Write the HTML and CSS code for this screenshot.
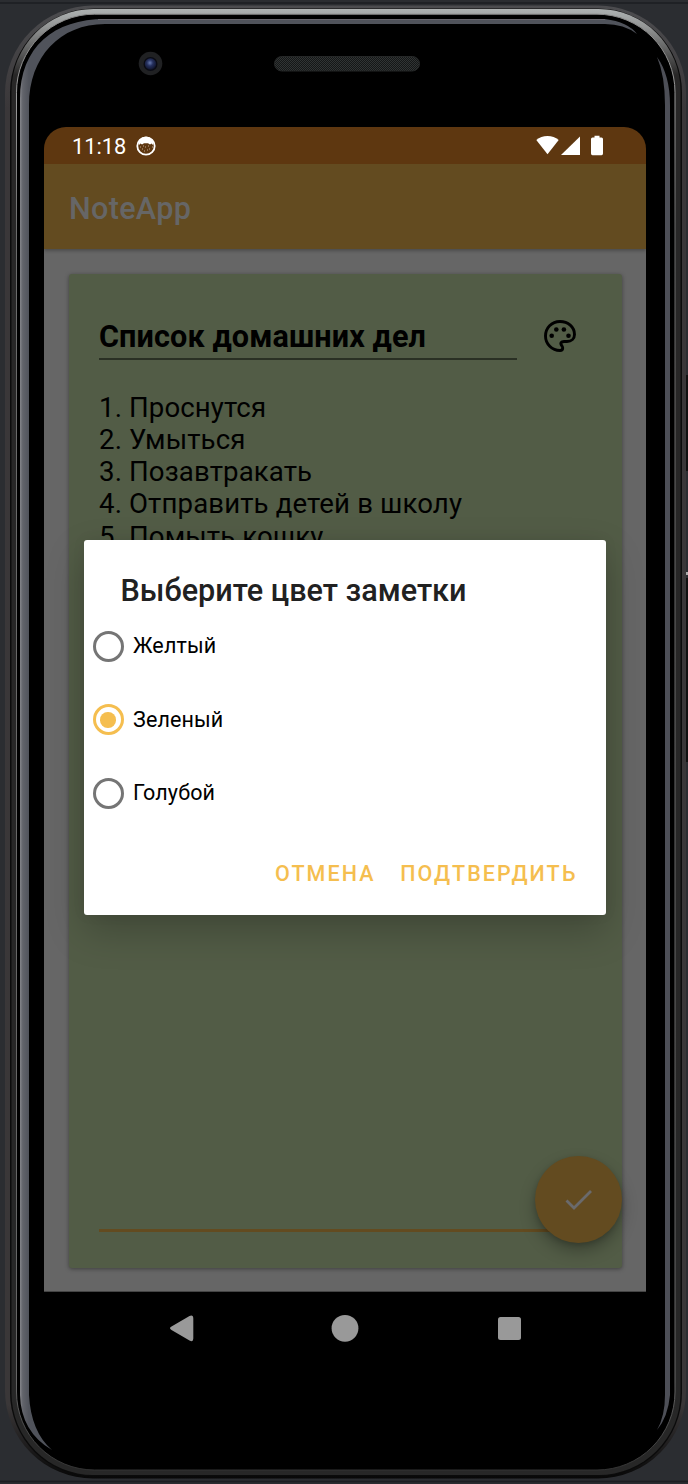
FILE: index.html
```html
<!DOCTYPE html>
<html lang="ru">
<head>
<meta charset="utf-8">
<title>NoteApp</title>
<link rel="stylesheet" href="styles.css">
</head>
<body>
<div class="stage">
  <svg class="phone" viewBox="0 0 688 1484" width="688" height="1484" aria-hidden="true">
    <defs>
      <linearGradient id="edge" x1="0" y1="0" x2="0" y2="1">
        <stop offset="0" stop-color="#4c4c4f"/><stop offset=".07" stop-color="#3a3739"/>
        <stop offset=".95" stop-color="#3a3738"/><stop offset="1" stop-color="#080808"/>
      </linearGradient>
      <linearGradient id="body" x1="0" y1="0" x2="0" y2="1">
        <stop offset="0" stop-color="#aeb2b2"/><stop offset=".012" stop-color="#949696"/>
        <stop offset=".045" stop-color="#282727"/><stop offset="1" stop-color="#272727"/>
      </linearGradient>
      <linearGradient id="line" x1="0" y1="0" x2="0" y2="1">
        <stop offset="0" stop-color="#8a8a8a"/><stop offset=".06" stop-color="#999"/><stop offset=".15" stop-color="#6c6c6c"/><stop offset=".94" stop-color="#666"/><stop offset="1" stop-color="#333"/>
      </linearGradient>
      <linearGradient id="glint" x1="20" x2="29" y1="0" y2="0" gradientUnits="userSpaceOnUse">
        <stop offset="0" stop-color="#85868b"/><stop offset=".3" stop-color="#62646b"/><stop offset="1" stop-color="#50535b"/>
      </linearGradient>
      <radialGradient id="lens" cx=".45" cy=".4" r=".6">
        <stop offset="0" stop-color="#6577ac"/><stop offset=".45" stop-color="#25305e"/><stop offset="1" stop-color="#10142a"/>
      </radialGradient>
      <pattern id="mesh" width="4" height="4" patternUnits="userSpaceOnUse">
        <rect width="4" height="4" fill="#151717"/>
        <path d="M0 0h1v1H0zM2 0h1v1H2zM1 1h1v1H1zM3 1h1v1H3zM0 2h1v1H0zM2 2h1v1H2zM1 3h1v1H1zM3 3h1v1H3z" fill="#313434"/>
      </pattern>
    </defs>
    <rect width="688" height="1484" fill="#2b2d31"/>
    <path d="M0 3h688M0 1481.500h688" stroke="#1d1e22" stroke-width="1.500"/>
    <path d="M687 375v96M687 578v184" stroke="#111" stroke-width="2"/>
    <path d="M687 572v3" stroke="#aaa" stroke-width="2"/>
    <rect x="5" y="5.500" width="681" height="1473" rx="88" fill="url(#edge)"/>
    <rect x="10" y="8.500" width="672" height="1468" rx="84" fill="#0b0b0b"/>
    <rect x="11.500" y="9" width="669" height="1466" rx="82" fill="url(#body)"/>
    <rect x="16.500" y="14.200" width="658.500" height="1455.800" rx="78" fill="#000" stroke="url(#line)"/>
    <path fill="url(#glint)" d="M20 1395V99C20 47 54 19 105 19H605Q628 22 637 34Q624 24 605 24H105C60 24 29 57 29 105V1395Q31 1432 52 1450Q21 1432 20 1395z"/>
    <path d="M98 19.500H605" stroke="#68666d"/>
    <path fill="#4d4f57" d="M657 57Q670 75 670 105V1395Q668 1417 657 1430Q665 1416 665 1395V105Q665 76 657 57z"/>
    <circle cx="150.500" cy="63.500" r="11.800" fill="#202123"/>
    <circle cx="150.500" cy="64" r="7" fill="#0a0b14"/>
    <circle cx="150.500" cy="64" r="5.700" fill="url(#lens)"/>
    <rect x="274.500" y="56.500" width="145" height="14.500" rx="7.250" fill="url(#mesh)" stroke="#252727"/>
  </svg>

  <main class="screen">
    <header class="status">
      <span class="clock">11:18</span>
      <svg class="face" viewBox="0 0 20 20" width="20" height="20">
        <circle cx="10" cy="10" r="8.700" fill="#5e3710" stroke="#fff" stroke-width="1.800"/>
        <path d="M2 6Q5 .800 10 .800T18 6L17 9L15.500 7.500L14 8.500L12 7.300H8L6 8.500L4.500 7.500L3 9z" fill="#fff"/>
        <path d="M4 11h1m2-1h1m4 0h1m3 1h1M6 13h1m6 0h1M8 15h1m2-1h1M9 11h1" stroke="#c0aa92"/>
      </svg>
      <svg class="signals" viewBox="0 0 70 22" width="70" height="22">
        <g fill="#fff">
          <path d="M.300 5Q5 1 11.500 1T22.700 5L11.500 19.200z"/>
          <path d="M44 1.500V20H25z"/>
          <path d="M58.500 .700h5V2.500h2q1.500 0 1.500 1.500V18.500q0 1.700-1.500 1.700h-9Q55 20.200 55 18.500V4q0-1.500 1.500-1.500h2z"/>
        </g>
      </svg>
    </header>
    <div class="appbar">NoteApp</div>
    <div class="content">
      <section class="card">
        <div class="head">
          <div class="name">Список домашних дел</div>
          <svg class="palette" viewBox="0 0 32 32" width="32" height="32">
            <path d="M16 1.500C7.500 1.500 1.500 8 1.500 16S8 30.500 16 30.500Q18.700 30.500 18.700 28Q18.700 27 18 26C15.500 23 17.500 21.500 20 21.500H23C27.500 21.500 30.500 18.500 30.500 14.500C30.500 7 24 1.500 16 1.500z" fill="none" stroke="#000" stroke-width="2.900"/>
            <circle cx="7.700" cy="15.700" r="2.300"/><circle cx="12.300" cy="9.500" r="2.300"/><circle cx="19.900" cy="9.500" r="2.300"/><circle cx="24.500" cy="15.700" r="2.300"/>
          </svg>
        </div>
        <div class="text">
          <div>1. Проснутся</div>
          <div>2. Умыться</div>
          <div>3. Позавтракать</div>
          <div>4. Отправить детей в школу</div>
          <div>5. Помыть кошку</div>
        </div>
      </section>
      <div class="fab">
        <svg viewBox="0 0 28 22" width="28" height="22"><path d="M1.500 11.500L9 19L26 2" fill="none" stroke="#6a6a6c" stroke-width="2.800"/></svg>
      </div>
    </div>
    <nav class="nav">
      <svg viewBox="0 0 602 74" width="602" height="74">
        <g fill="#999">
          <path d="M127.500 34.500L145.500 24Q149.300 22.500 149.300 26.500V46.500Q149.300 50.500 145.500 48.500L127.500 38Q124.500 36 127.500 34.500z"/>
          <circle cx="301" cy="36.300" r="13.400"/>
          <rect x="454" y="25" width="23" height="23" rx="2.500"/>
        </g>
      </svg>
    </nav>

    <div class="dialog" role="dialog">
      <h1 class="title">Выберите цвет заметки</h1>
      <div class="option"><i class="radio"></i>Желтый</div>
      <div class="option"><i class="radio on"></i>Зеленый</div>
      <div class="option"><i class="radio"></i>Голубой</div>
      <div class="actions"><span>ОТМЕНА</span><span>ПОДТВЕРДИТЬ</span></div>
    </div>
  </main>
</div>
</body>
</html>
```
FILE: styles.css
```css
* { box-sizing: border-box; }
body { margin: 0; background: #2b2d31; font-family: Roboto, "Liberation Sans", sans-serif; color: #000; }
.stage { position: relative; width: 688px; height: 1484px; overflow: hidden; padding: 127px 42px 0 44px; }
.phone { position: absolute; inset: 0; }
.screen { position: relative; width: 602px; height: 1238px; border-radius: 22px 22px 0 0; overflow: hidden; display: flex; flex-direction: column; background: #000; }
.status { height: 37px; background: #5e3710; display: flex; align-items: center; padding: 0 40px 0 28px; color: #fff; }
.clock { font-size: 21.8px; line-height: 37px; padding-top: 2px; width: 64px; white-space: nowrap; }
.face { margin-top: 1px; }
.signals { margin-left: auto; }
.appbar { height: 85px; background: #634b20; padding: 2px 25px 0; font-size: 30.6px; font-weight: 500; line-height: 85px; letter-spacing: .3px; color: #666; z-index: 1; box-shadow: 0 2px 3px rgba(0,0,0,.25); clip-path: inset(0 0 -6px 0); }
.content { position: relative; height: 1043px; background: #666; padding: 25px 24px 23px; border-bottom: 1px solid #444; }
.card { height: 994px; margin: 0 .5px; background: #525c46; border-radius: 3px; padding: 41px 30.5px 0; box-shadow: 0 1px 4px rgba(0,0,0,.4); position: relative; }
.card::after { content: ""; position: absolute; left: 30.5px; right: 30.5px; bottom: 36px; height: 3px; background: #634b20; }
.head { display: flex; gap: 27px; }
.name { flex: none; width: 418px; height: 45px; border-bottom: 2px solid #2a3024; font-size: 30.6px; font-weight: 700; line-height: 43px; letter-spacing: .1px; white-space: nowrap; }
.palette { flex: none; margin-top: 5px; }
.text { margin-top: 31.5px; font-size: 27.6px; line-height: 32.3px; letter-spacing: .12px; white-space: nowrap; }
.fab { position: absolute; right: 24px; bottom: 48px; width: 87px; height: 87px; border-radius: 50%; background: #634b20; display: flex; align-items: center; justify-content: center; box-shadow: 0 8px 16px rgba(0,0,0,.28), 0 2px 5px rgba(0,0,0,.15); }
.nav { height: 74px; background: #000; }
.dialog { position: absolute; z-index: 2; left: 39.5px; top: 413px; width: 522.5px; height: 375px; background: #fff; border-radius: 3px; box-shadow: 0 16px 38px rgba(0,0,0,.22), 0 0 14px rgba(0,0,0,.06); }
.title { margin: 0; padding: 32px 0 0 37px; height: 69.5px; font-size: 30.6px; line-height: 38px; font-weight: 500; color: #212121; white-space: nowrap; }
.option { height: 73.5px; display: flex; align-items: center; gap: 9.5px; padding-left: 9px; font-size: 21.5px; line-height: 26px; letter-spacing: .12px; }
.radio { width: 31px; height: 31px; border: 3px solid #757575; border-radius: 50%; display: flex; align-items: center; justify-content: center; }
.on { border-color: #f5be4f; }
.on::after { content: ""; width: 15.5px; height: 15.5px; border-radius: 50%; background: #f5be4f; }
.actions { display: flex; justify-content: flex-end; gap: 24.5px; padding: 29.5px 28.5px 0 0; font-size: 21.5px; line-height: 28px; font-weight: 500; letter-spacing: 2.1px; color: #f5be4f; white-space: nowrap; }
```
